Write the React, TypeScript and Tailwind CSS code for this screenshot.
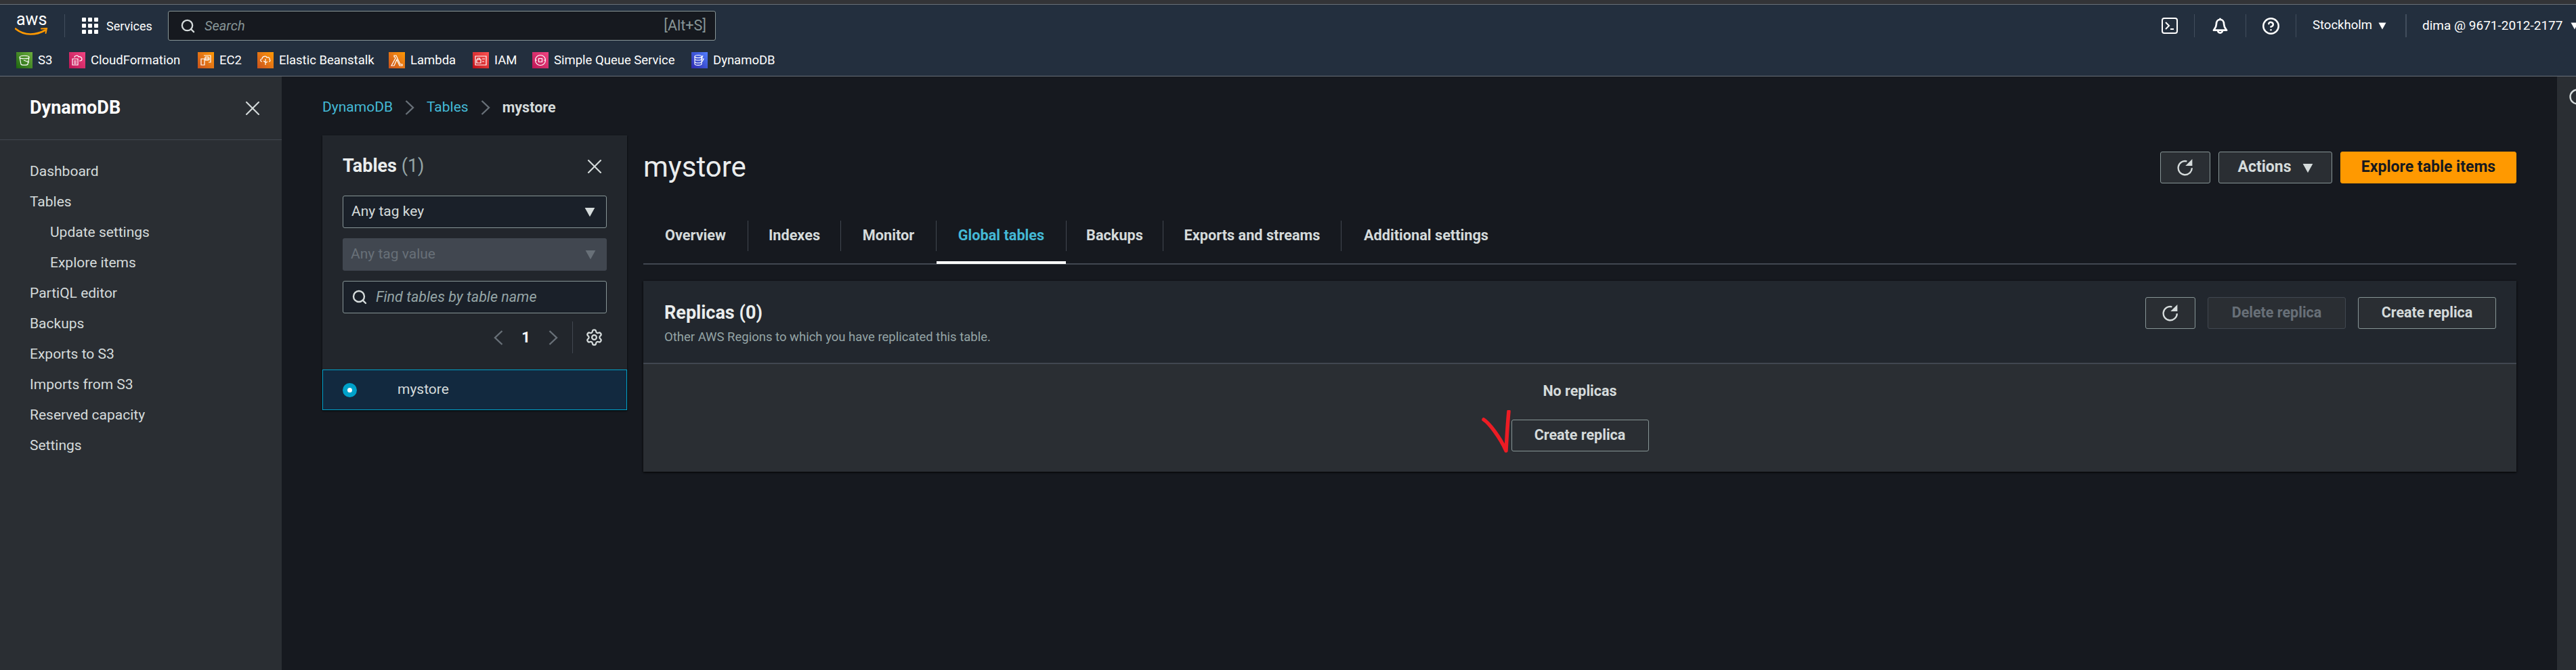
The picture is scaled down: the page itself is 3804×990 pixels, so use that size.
import type { ReactNode } from 'react';
import { X, Settings, Search, CircleHelp } from 'lucide-react';

const sideNav = [
  { label: 'Dashboard' },
  { label: 'Tables' },
  { label: 'Update settings', sub: true },
  { label: 'Explore items', sub: true },
  { label: 'PartiQL editor' },
  { label: 'Backups' },
  { label: 'Exports to S3' },
  { label: 'Imports from S3' },
  { label: 'Reserved capacity' },
  { label: 'Settings' },
];

const tabs = [
  { label: 'Overview', width: 'w-[155px]' },
  { label: 'Indexes', width: 'w-[137px]' },
  { label: 'Monitor', width: 'w-[141px]' },
  { label: 'Global tables', width: 'w-[192px]' },
  { label: 'Backups', width: 'w-[143px]' },
  { label: 'Exports and streams', width: 'w-[263px]' },
  { label: 'Additional settings', width: 'w-[250px]' },
];

function Caret({ className }: { className: string }) {
  return (
    <svg viewBox="0 0 12 12" className={className}>
      <path d="M0.5 1.500h11L6 11.500z" fill="currentColor" />
    </svg>
  );
}

function Chevron({ left, className }: { left?: boolean; className: string }) {
  return (
    <svg viewBox="0 0 14 22" className={`w-[14px] h-[22px] shrink-0 ${className}`} fill="none" stroke="currentColor" strokeWidth="2.400">
      <path d={left ? 'M12.500 1L2 11l10.500 10' : 'M1.500 1L12 11 1.500 21'} />
    </svg>
  );
}

function Refresh() {
  return (
    <svg viewBox="2 1 21.500 23.500" className="w-6 h-[25px] text-[#d5dbdb]" fill="none" stroke="currentColor" strokeWidth="2.200">
      <path d="M15 4.200A9.500 9.500 0 1 0 22 13.500" />
      <path d="M22.500 1v9.500h-9.500z" fill="currentColor" stroke="none" />
    </svg>
  );
}

function Fav({ bg, label, width, children }: { bg: string; label: string; width: string; children: ReactNode }) {
  return (
    <div className={`flex items-center shrink-0 ${width}`}>
      <div className={`w-6 h-6 ${bg} flex items-center justify-center`}>
        <svg viewBox="0 0 24 24" className="w-6 h-6" fill="none" stroke="#fff" strokeWidth="1.200">
          {children}
        </svg>
      </div>
      <span className="ml-2 text-[18.5px] leading-6 text-white whitespace-nowrap">{label}</span>
    </div>
  );
}

function Btn({ children, className }: { children: ReactNode; className: string }) {
  return (
    <button className={`h-[47px] flex items-center justify-center rounded-[3px] border font-bold ${className}`}>
      {children}
    </button>
  );
}

export default function App() {
  return (
    <div className="w-[3804px] h-[990px] overflow-hidden bg-[#16191f] flex flex-col font-['Roboto',sans-serif]">
      <div className="h-[6px] bg-[#333437]" />
      {/* top nav */}
      <header className="h-[107px] shrink-0 bg-[#232f3e] border-t border-b border-[#687078] flex flex-col overflow-hidden">
        <div className="h-[62px] flex items-center">
          <div className="w-[95px] pl-6 shrink-0 -mt-[6px] flex flex-col">
            <span className="text-[25px] leading-[24px] text-white">aws</span>
            <svg viewBox="0 0 50 12" className="w-[50px] h-[12px] -ml-[2px]">
              <path d="M1 1.500c6 5 14 8 22 8 7 0 15-2 22-6" fill="none" stroke="#f90" strokeWidth="2.600" strokeLinecap="round" />
              <path d="M39 1.500l8-.5-1.500 7" fill="none" stroke="#f90" strokeWidth="2" strokeLinecap="round" />
            </svg>
          </div>
          <div className="w-px h-[34px] bg-[#414d5c] shrink-0" />
          <div className="w-[24px] h-[24px] ml-[25px] grid grid-cols-3 gap-[3px] shrink-0">
            {Array.from({ length: 9 }).map((_, i) => (
              <div key={i} className="bg-white rounded-[1px]" />
            ))}
          </div>
          <span className="ml-3 w-[67px] text-[18px] text-white whitespace-nowrap shrink-0">Services</span>
          <div className="ml-[24px] w-[809px] h-[44px] shrink-0 rounded-[3px] border border-[#879596] bg-[#16191f] flex items-center pl-[17px] pr-[13px]">
            <Search className="w-[23px] h-[23px] text-[#d5dbdb]" strokeWidth={2.4} />
            <span className="ml-[13px] italic text-[20px] text-[#879596]">Search</span>
            <span className="ml-auto text-[21.5px] text-[#879596]">[Alt+S]</span>
          </div>
          <div className="ml-[2135px] flex items-center h-[36px] text-white shrink-0">
            <div className="w-6 h-6 rounded-[4px] border-[2.5px] border-white flex items-center justify-center mr-[24px]">
              <svg viewBox="0 0 16 16" className="w-4 h-4" fill="none" stroke="#fff" strokeWidth="2">
                <path d="M2 3l5 5-5 5M9 13h5" />
              </svg>
            </div>
            <div className="w-px h-[34px] bg-[#414d5c]" />
            <svg viewBox="0 0 24 24" className="mx-[24px] w-[27px] h-[27px]" fill="none" stroke="#fff" strokeWidth="2.400" strokeLinejoin="round">
              <path d="M12 1.500v2M12 3.500c-3.500 0-5 3-5 6 0 3.500-1.500 5-3.500 8h17c-2-3-3.500-4.500-3.500-8 0-3-1.500-6-5-6z" />
              <path d="M9 18a3 3 0 0 0 6 0" />
            </svg>
            <div className="w-px h-[34px] bg-[#414d5c]" />
            <CircleHelp className="mx-[23px] w-[27px] h-[27px] text-white" strokeWidth={2.2} />
            <div className="w-px h-[34px] bg-[#414d5c]" />
            <span className="ml-[24px] w-[88px] text-[18.5px] whitespace-nowrap">Stockholm</span>
            <Caret className="ml-[9px] w-3 h-3 text-white" />
            <div className="ml-[28px] w-[2px] h-[34px] bg-[#414d5c]" />
            <span className="ml-[23px] w-[210px] text-[19px] whitespace-nowrap">dima @ 9671-2012-2177</span>
            <Caret className="ml-[9px] w-3 h-3 text-white shrink-0" />
          </div>
        </div>
        <div className="flex-1 flex items-start pt-[8px] pl-6">
          <Fav bg="bg-linear-to-tr from-[#1b660f] to-[#6cae3e]" label="S3" width="w-[78px]">
            <path d="M5 7.500c0-3 14-3 14 0M5 7.500c0 3 14 3 14 0l-2 10.500c-.5 1.500-9.500 1.500-10 0z" />
            <path d="M11 12l8 3" />
          </Fav>
          <Fav bg="bg-linear-to-tr from-[#bc1356] to-[#f34482]" label="CloudFormation" width="w-[190px]">
            <path d="M5 10h8v9H5zM7 13h4M7 15h4M7 17h4" />
            <path d="M8 8c0-3 5-4 6-1 2-1 5 1 5 3s-1 3-3 3h-1" />
          </Fav>
          <Fav bg="bg-linear-to-tr from-[#c8511b] to-[#f90]" label="EC2" width="w-[88px]">
            <path d="M9 5h10v10h-3M5 10h5v9H5z" />
            <path d="M11 7h5v5h-5zM10 9h8M10 11h8" strokeWidth="1" />
          </Fav>
          <Fav bg="bg-linear-to-tr from-[#c8511b] to-[#f90]" label="Elastic Beanstalk" width="w-[194px]">
            <path d="M7 14c-3 0-3-4 0-4 0-4 6-5 7-2 3-1 5 1 4 3 2 1 1 3-1 3M12 10v9M12 15l-3-2M12 16l3-2" />
          </Fav>
          <Fav bg="bg-linear-to-tr from-[#c8511b] to-[#f90]" label="Lambda" width="w-[124px]">
            <path d="M8 5h3l6 13h3v2h-4l-4-9-4 9H4l6-11-1-2H8z" />
          </Fav>
          <Fav bg="bg-linear-to-tr from-[#bd0816] to-[#ff5252]" label="IAM" width="w-[88px]">
            <path d="M4 6h16v13H4zM6 11h6v5H6zM7.500 11V9h3v2M14 10h4M14 14h3" />
          </Fav>
          <Fav bg="bg-linear-to-tr from-[#bc1356] to-[#f34482]" label="Simple Queue Service" width="w-[235px]">
            <circle cx="12" cy="12" r="7.500" />
            <path d="M9.500 9.500h5v5h-5zM4 12h3M17 12h3" />
          </Fav>
          <Fav bg="bg-linear-to-tr from-[#2e27ad] to-[#527fff]" label="DynamoDB" width="w-[130px]">
            <ellipse cx="10" cy="6.500" rx="5" ry="2" />
            <path d="M5 6.500v11c0 2.500 10 2.500 10 0v-11M5 10.500c1 2 9 2 10 0M5 14.500c1 2 9 2 10 0M17 5l-2 5h3l-2 4" />
          </Fav>
        </div>
      </header>

      <div className="flex-1 flex min-h-0">
        {/* side navigation */}
        <aside className="w-[416px] shrink-0 bg-[#2a2e33] text-[#d5dbdb]">
          <div className="h-[94px] border-b border-[#414750] pl-[44px] pr-[25px] flex items-center justify-between">
            <span className="text-[27px] font-bold text-white">DynamoDB</span>
            <X className="w-9 h-9 text-[#d5dbdb]" strokeWidth={1.4} />
          </div>
          <nav className="pt-[24px]">
            {sideNav.map((item) => (
              <div
                key={item.label}
                className={`h-[45px] flex items-center text-[21px] ${item.sub ? 'pl-[74px]' : 'pl-[44px]'}`}
              >
                {item.label}
              </div>
            ))}
          </nav>
        </aside>

        <main className="flex-1 min-w-0 pl-[60px] pr-[60px]">
          {/* breadcrumb */}
          <div className="h-[87px] flex items-center pt-[5px] text-[21px]">
            <span className="text-[#44b9d6]">DynamoDB</span>
            <Chevron className="mx-[18px] text-[#687078]" />
            <span className="text-[#44b9d6]">Tables</span>
            <Chevron className="mx-[18px] text-[#687078]" />
            <span className="font-bold text-[21.5px] text-[#d5dbdb]">mystore</span>
          </div>

          <div className="flex items-start gap-6">
            {/* tables panel */}
            <section className="w-[450px] shrink-0 h-[406px] bg-[#22262c] flex flex-col shadow-[0_1px_2px_#000]">
              <div className="flex-1 px-[30px]">
                <div className="h-[89px] flex items-center justify-between pt-[2px]">
                  <h2 className="text-[27px] font-bold text-[#eaeded]">
                    Tables <span className="font-normal text-[#95a5a6]">(1)</span>
                  </h2>
                  <X className="w-9 h-9 text-[#d5dbdb]" strokeWidth={1.4} />
                </div>
                <div className="h-[48px] rounded-[3px] border border-[#879596] bg-[#1a2029] flex items-center pl-3 pr-4 text-[21px] text-[#d5dbdb]">
                  Any tag key
                  <Caret className="ml-auto w-[16px] h-[16px] text-[#d5dbdb]" />
                </div>
                <div className="mt-[15px] h-[48px] rounded-[3px] bg-[#414750] flex items-center pl-3 pr-4 text-[21px] text-[#687078]">
                  Any tag value
                  <Caret className="ml-auto w-[16px] h-[16px] text-[#687078]" />
                </div>
                <div className="mt-[15px] h-[48px] rounded-[3px] border border-[#879596] bg-[#1a2029] flex items-center px-3 text-[21.5px] italic text-[#95a5a6]">
                  <Search className="w-[24px] h-[24px] mr-[12px] text-[#d5dbdb]" strokeWidth={2.4} />
                  Find tables by table name
                </div>
                <div className="mt-3 h-[47px] flex items-center justify-end">
                  <Chevron left className="text-[#687078]" />
                  <span className="w-[13px] mx-[27px] text-center text-[22px] font-bold text-white">1</span>
                  <Chevron className="text-[#687078]" />
                  <div className="w-px h-[47px] bg-[#414750] ml-[21px] mr-[18px]" />
                  <Settings className="w-[27px] h-[27px] text-[#d5dbdb] mr-[5px]" strokeWidth={2} />
                </div>
              </div>
              <div className="h-[60px] bg-[#12293f] border border-[#00a1c9] flex items-center pl-[29px] text-[21px] text-[#d5dbdb]">
                <div className="w-[21px] h-[21px] rounded-full border-[7px] border-[#00a1c9] bg-white" />
                <span className="ml-[60px]">mystore</span>
              </div>
            </section>

            {/* table detail */}
            <section className="flex-1 min-w-0 pt-[24px]">
              <div className="h-[47px] flex items-center justify-between">
                <h1 className="text-[42px] text-[#eaeded] leading-none pb-[2px]">mystore</h1>
                <div className="flex items-center gap-3">
                  <Btn className="w-[74px] border-[#879596] bg-[#2a2e33] text-[#d5dbdb]">
                    <Refresh />
                  </Btn>
                  <Btn className="w-[168px] border-[#879596] bg-[#2a2e33] text-[#d5dbdb] text-[23px]">
                    Actions
                    <Caret className="ml-4 w-[16px] h-[16px] text-[#d5dbdb]" />
                  </Btn>
                  <Btn className="w-[260px] border-[#f90] bg-[#f90] text-[#16191f] text-[23px]">Explore table items</Btn>
                </div>
              </div>

              <div className="mt-[55px] h-[65px] border-b-2 border-[#414750] flex items-start">
                {tabs.map((t, i) => (
                  <div
                    key={t.label}
                    className={`relative flex items-center justify-center h-[45px] ${t.width} text-[21.7px] font-bold whitespace-nowrap ${i < tabs.length - 1 ? 'border-r border-[#414750]' : ''} ${t.label === 'Global tables' ? 'text-[#44b9d6]' : 'text-[#d5dbdb]'}`}
                  >
                    {t.label}
                    {t.label === 'Global tables' && <div className="absolute left-0 right-0 top-[60px] h-[4px] bg-white" />}
                  </div>
                ))}
              </div>

              <div className="mt-[24px] shadow-[0_1px_3px_#000]">
                <div className="h-[123px] bg-[#22272e] border-b-2 border-[#414750] pl-[31px] pr-[30px] pt-[24px] flex items-start justify-between">
                  <div>
                    <h2 className="text-[27px] leading-[46px] font-bold text-[#eaeded]">Replicas (0)</h2>
                    <p className="text-[18.5px] leading-[22px] mt-[2px] text-[#95a5a6]">Other AWS Regions to which you have replicated this table.</p>
                  </div>
                  <div className="flex gap-[18px]">
                    <Btn className="w-[74px] border-[#879596] bg-[#2a2e33]">
                      <Refresh />
                    </Btn>
                    <Btn className="w-[204px] border-[#414750] bg-[#2a2e33] text-[#687078] text-[21.5px]">Delete replica</Btn>
                    <Btn className="w-[204px] border-[#879596] bg-[#2a2e33] text-[#d5dbdb] text-[21.5px]">Create replica</Btn>
                  </div>
                </div>
                <div className="h-[159px] bg-[#2a2e33] flex flex-col items-center pt-[26px]">
                  <div className="text-[21.5px] leading-[28px] font-bold text-[#d5dbdb]">No replicas</div>
                  <div className="relative mt-[28px]">
                    <Btn className="w-[203px] border-[#879596] bg-[#2a2e33] text-[#d5dbdb] text-[21.5px]">Create replica</Btn>
                    {/* red hand drawn tick */}
                    <svg viewBox="0 0 50 70" className="absolute left-[-45px] top-[-14px] w-[50px] h-[70px]" fill="none" stroke="#ec1c24" strokeWidth="5.500" strokeLinecap="round" strokeLinejoin="round">
                      <path d="M4 14c8 5 24 26 33 46 1-18 2-38 4-58" />
                    </svg>
                  </div>
                </div>
              </div>
            </section>
          </div>
        </main>

        {/* help panel rail, the icon runs off the page */}
        <aside className="w-[28px] shrink-0 bg-[#2a2e33] overflow-hidden pl-[18px] pt-[18px]">
          <svg viewBox="0 0 24 24" className="w-6 h-6 text-[#d5dbdb]" fill="none" stroke="currentColor" strokeWidth="2.400">
            <circle cx="12" cy="12" r="10.500" />
            <path d="M12 6.500v1.500M12 10.500v7" />
          </svg>
        </aside>
      </div>
    </div>
  );
}
